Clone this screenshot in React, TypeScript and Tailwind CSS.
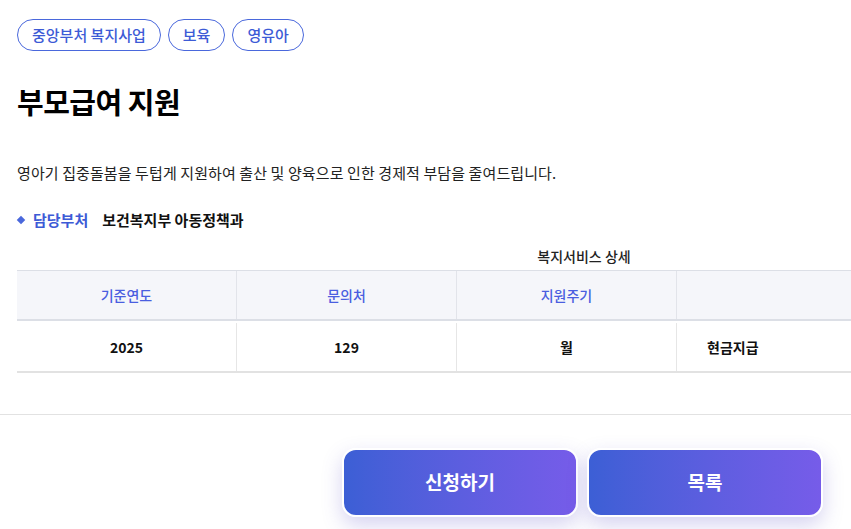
import React from 'react';

const TAGS = ['중앙부처 복지사업', '보육', '영유아'];
const HEADERS = ['기준연도', '문의처', '지원주기', '', ''];
const ROW = ['2025', '129', '월', '현금지급', ''];

const App: React.FC = () => {
  return (
    <div
      className="w-[851px] h-[529px] overflow-hidden bg-white text-[#111]"
      style={{ fontFamily: '"Noto Sans CJK KR", "Noto Sans", sans-serif' }}
    >
      <div className="px-[17px] pt-[19px]">
        <div className="flex gap-[7px]">
          {TAGS.map((t) => (
            <span
              key={t}
              className="h-[32px] px-[14px] flex items-center rounded-full border border-[#4a68dc] text-[#3d5bd6] text-[15px] font-medium"
            >
              {t}
            </span>
          ))}
        </div>
        <h1 className="mt-[30px] text-[29px] leading-[40px] font-bold tracking-[-0.5px] text-black">부모급여 지원</h1>
        <p className="mt-[41px] text-[15px] leading-[22px] tracking-[0.1px] text-[#222]">
          영아기 집중돌봄을 두텁게 지원하여 출산 및 양육으로 인한 경제적 부담을 줄여드립니다.
        </p>
        <div className="mt-[25px] flex items-center text-[15px] leading-[22px]">
          <span className="w-[6px] h-[6px] bg-[#4a68dc] rotate-45 ml-[1px] mr-[9px]" />
          <span className="text-[#3d5bd6] font-semibold">담당부처</span>
          <span className="ml-[14px] font-semibold text-[#111]">보건복지부 아동정책과</span>
        </div>
      </div>
      <div className="pl-[17px] overflow-hidden">
        <div className="w-[1134px] mt-[15px]">
          <div className="text-center text-[14px] leading-[20px] font-medium text-[#222]">복지서비스 상세</div>
          <div className="mt-[4px] border-t border-[#dcdfe6]">
            <div className="flex bg-[#f5f6fa] border-b-2 border-[#dcdfe6]">
              {HEADERS.map((h, i) => (
                <div
                  key={i}
                  className={`h-[48px] flex items-center justify-center text-[14px] font-medium text-[#4a5ee0] ${
                    i < 4 ? 'w-[220px] border-r border-[#e2e4ea]' : 'flex-1'
                  }`}
                >
                  {h}
                </div>
              ))}
            </div>
            <div className="flex border-b-2 border-[#e2e2e2] pt-[2px]">
              {ROW.map((c, i) => (
                <div
                  key={i}
                  className={`h-[48px] flex items-center text-[14px] font-semibold text-[#111] ${
                    i < 3
                      ? 'w-[220px] justify-center border-r border-[#e6e6e6]'
                      : i === 3
                      ? 'w-[220px] pl-[30px]'
                      : 'flex-1'
                  }`}
                >
                  {c}
                </div>
              ))}
            </div>
          </div>
        </div>
      </div>
      <div className="mt-[41px] border-t border-[#e2e2e2]" />
      <div className="mt-[33px] flex gap-[9px] pl-[342px]">
        {['신청하기', '목록'].map((b) => (
          <button
            key={b}
            className="w-[236px] h-[69px] shrink-0 rounded-[14px] border-2 border-white bg-gradient-to-r from-[#3c5fd5] to-[#765ce9] text-white text-[19px] font-bold shadow-[0_8px_20px_rgba(90,80,200,0.25)]"
          >
            {b}
          </button>
        ))}
      </div>
    </div>
  );
};

export default App;
